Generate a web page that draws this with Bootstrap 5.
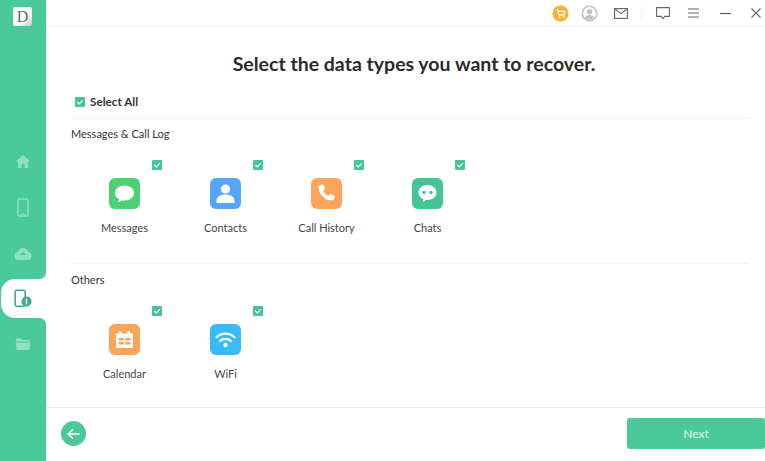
<!DOCTYPE html>
<html lang="en">
<head>
  <meta charset="UTF-8" />
  <meta name="viewport" content="width=device-width, initial-scale=1.0" />
  <title>Data Recovery</title>
  <link href="https://cdn.jsdelivr.net/npm/bootstrap@5.3.3/dist/css/bootstrap.min.css" rel="stylesheet">
  <style>
    html, body { height: 100%; overflow: hidden; }
    body { background: #fff; font-family: Lato, "Open Sans", "Liberation Sans", sans-serif; color: #333; }
    .app-shell { width: 765px; height: 461px; }

    .side-rail { width: 46px; background: #4ac99b; }
    .app-logo { width: 19px; height: 19px; margin: 7px 0 0 13px; background: linear-gradient(135deg, #fff 55%, #c9c9c9); border-radius: 2px; color: #5d6f69; font: 400 16px/19px "Liberation Serif", serif; text-align: center; }
    .rail-nav { margin-top: 116px; }
    .rail-item { height: 39px; margin-bottom: 6.5px; margin-left: 1px; padding-right: 2px; border-radius: 14px 0 0 14px; }
    .rail-item.is-active { background: #fff; position: relative; }
    .rail-item.is-active::before, .rail-item.is-active::after { content: ""; position: absolute; right: 0; width: 6px; height: 6px; }
    .rail-item.is-active::before { top: -6px; background: radial-gradient(circle at 0 0, #4ac99b 5.5px, #fff 6px); }
    .rail-item.is-active::after { bottom: -6px; background: radial-gradient(circle at 0 100%, #4ac99b 5.5px, #fff 6px); }

    .top-bar { height: 27px; border-bottom: 1px solid #f6f6f6; padding-right: 4px; }
    .top-sep { width: 1px; height: 14px; background: #f0f0f0; }
    .page-title { font-size: 19.5px; font-weight: 700; line-height: 24px; color: #2b2b2b; margin: 25px 0 0; padding-left: 17px; }
    .select-row { margin: 17px 0 3px 29px; height: 18px; font-size: 11.7px; font-weight: 700; color: #333; }
    .select-text { margin-left: 1px; }
    .tick-box { width: 10px; height: 10px; background: #45c596; border-radius: 1px; flex: none; }
    .tick-box svg { display: block; }
    .group-rule { height: 1px; background: #f3f3f3; margin: 0 15px 0 24px; }
    .group-rule.is-later { margin-bottom: 1px; }
    .group-name { font-size: 11px; line-height: 14px; margin: 8px 0 0 25px; color: #333; }
    .type-row { margin: 19px 0 0 28px; }
    .type-cell { width: 101px; height: 95px; padding-top: 18px; position: relative; }
    .type-cell .tick-box { position: absolute; top: 0; left: 78px; }
    .type-icon { width: 31px; height: 31px; border-radius: 6px; margin: 0 auto; }
    .type-icon svg { display: block; }
    .type-label { font-size: 11px; line-height: 14px; margin-top: 12px; color: #444; text-align: center; }

    .foot-bar { height: 54px; border-top: 1px solid #e8e8e8; padding-bottom: 2px; }
    .back-btn { width: 25px; height: 25px; margin-left: 15px; background: #4ac99b; border-radius: 50%; border: 0; padding: 0; }
    .next-btn { width: 138px; height: 31px; background: #4ac99b; border: 0; border-radius: 3px; color: #e4f7ef; font-size: 12px; padding: 0; }
  </style>
</head>
<body>
  <div class="app-shell d-flex">
    <aside class="side-rail flex-shrink-0">
      <div class="app-logo">D</div>
      <div class="rail-nav">
        <div class="rail-item d-flex align-items-center justify-content-center">
          <svg width="16" height="17" viewBox="0 0 18 18"><path d="M9 1.500 1 9h2.400v7.200h3.900v-4.600h3.400v4.600h3.900V9H17z" fill="#8fdfc1"/></svg>
        </div>
        <div class="rail-item d-flex align-items-center justify-content-center">
          <svg width="12" height="19" viewBox="0 0 12 19"><rect x="1" y="1" width="10" height="17" rx="1.500" fill="none" stroke="#8fdfc1" stroke-width="1.500"/><rect x="4" y="15.400" width="4" height="1.400" fill="#8fdfc1"/></svg>
        </div>
        <div class="rail-item d-flex align-items-center justify-content-center">
          <svg width="18" height="16" viewBox="0 0 18 16"><path d="M4.500 15A4 4 0 0 1 3.600 7.100 5.600 5.600 0 0 1 14.400 7.100 4 4 0 0 1 13.500 15z" fill="#8fdfc1"/><path d="M9 6.500 6 10h6z" fill="#4ac99b"/></svg>
        </div>
        <div class="rail-item is-active d-flex align-items-center justify-content-center">
          <svg width="18" height="19" viewBox="0 0 18 19"><rect x="1.200" y="1.200" width="10" height="16" rx="1.500" fill="none" stroke="#3fae87" stroke-width="1.600"/><circle cx="12.500" cy="12.500" r="5" fill="#3fae87"/><rect x="11.800" y="9.500" width="1.400" height="6" fill="#fff"/></svg>
        </div>
        <div class="rail-item d-flex align-items-center justify-content-center">
          <svg width="16" height="14" viewBox="0 0 16 14"><path d="M1 3V1.500h5L7.500 3H15v1.500H1z" fill="#8fdfc1"/><path d="M.5 5.500h15L14.400 13H1.600z" fill="#8fdfc1"/></svg>
        </div>
      </div>
    </aside>

    <main class="flex-grow-1 d-flex flex-column">
      <div class="top-bar d-flex align-items-center justify-content-end flex-shrink-0">
        <svg width="17" height="17" viewBox="0 0 17 17"><circle cx="8.500" cy="8.500" r="8" fill="#f9b233"/><path d="M4.500 5h1.400l1 5h5l1-3.600H6.200" fill="none" stroke="#fff" stroke-width="1.300"/><circle cx="7.300" cy="12" r=".9" fill="#fff"/><circle cx="11.500" cy="12" r=".9" fill="#fff"/></svg>
        <svg style="margin-left:12px" width="17" height="17" viewBox="0 0 17 17"><circle cx="8.500" cy="8.500" r="7.200" fill="#fff" stroke="#c2c2c2" stroke-width="1.600"/><circle cx="8.500" cy="6.700" r="2.700" fill="#c2c2c2"/><path d="M3.800 13c.8-2.300 2.600-3 4.700-3s3.900.7 4.700 3a7 7 0 0 1-9.400 0z" fill="#c2c2c2"/></svg>
        <svg style="margin-left:16px" width="14" height="11" viewBox="0 0 14 11"><rect x=".6" y=".6" width="12.800" height="9.800" fill="none" stroke="#666" stroke-width="1.100"/><path d="M1 1l6 4.600L13 1" fill="none" stroke="#666" stroke-width="1.100"/></svg>
        <span class="top-sep" style="margin-left:13px"></span>
        <svg style="margin-left:14px" width="14" height="13" viewBox="0 0 14 13"><path d="M.6.6h12.800v8.800H8.800L7 11.600 5.200 9.400H.6z" fill="none" stroke="#666" stroke-width="1.100"/></svg>
        <svg style="margin-left:18px" width="11" height="10" viewBox="0 0 11 10"><path d="M0 1h11M0 5h11M0 9h11" stroke="#666" stroke-width="1.100"/></svg>
        <svg style="margin-left:21px" width="11" height="3" viewBox="0 0 11 3"><path d="M0 1.500h11" stroke="#555" stroke-width="1.100"/></svg>
        <svg style="margin-left:20px" width="10" height="10" viewBox="0 0 10 10"><path d="M.5.500l9 9M9.500.500l-9 9" stroke="#666" stroke-width="1.100"/></svg>
      </div>

      <h1 class="page-title text-center">Select the data types you want to recover.</h1>

      <label class="select-row d-flex align-items-center gap-1">
        <span class="tick-box"><svg width="10" height="10" viewBox="0 0 10 10"><path d="M2.300 5l2 2 3.400-3.600" fill="none" stroke="#fff" stroke-width="1.200"/></svg></span>
        <span class="select-text">Select All</span>
      </label>
      <div class="group-rule mt-1"></div>

      <div class="group-name">Messages &amp; Call Log</div>
      <div class="type-row d-flex">
        <div class="type-cell">
          <span class="tick-box"><svg width="10" height="10" viewBox="0 0 10 10"><path d="M2.300 5l2 2 3.400-3.600" fill="none" stroke="#fff" stroke-width="1.200"/></svg></span>
          <div class="type-icon" style="background:#4dd176">
            <svg width="31" height="31" viewBox="0 0 31 31"><path d="M15.500 7.500c-5.500 0-9.500 3.300-9.500 7.500 0 2.700 1.700 5 4.300 6.300-.2 1-.9 2-1.800 2.700 1.900 0 3.500-.7 4.700-1.700.7.100 1.500.2 2.300.2 5.500 0 9.500-3.300 9.500-7.500s-4-7.500-9.500-7.500z" fill="#fff"/></svg>
          </div>
          <div class="type-label">Messages</div>
        </div>
        <div class="type-cell">
          <span class="tick-box"><svg width="10" height="10" viewBox="0 0 10 10"><path d="M2.300 5l2 2 3.400-3.600" fill="none" stroke="#fff" stroke-width="1.200"/></svg></span>
          <div class="type-icon" style="background:#55a5fa">
            <svg width="31" height="31" viewBox="0 0 31 31"><circle cx="15.500" cy="11" r="4.600" fill="#fff"/><path d="M6.500 25v-2c0-4 3.500-6.500 9-6.500s9 2.500 9 6.500v2z" fill="#fff"/></svg>
          </div>
          <div class="type-label">Contacts</div>
        </div>
        <div class="type-cell">
          <span class="tick-box"><svg width="10" height="10" viewBox="0 0 10 10"><path d="M2.300 5l2 2 3.400-3.600" fill="none" stroke="#fff" stroke-width="1.200"/></svg></span>
          <div class="type-icon" style="background:#fba55c">
            <svg width="31" height="31" viewBox="0 0 31 31"><path d="M8.500 7.500l3-.9c.6-.2 1 .1 1.200.6l1.300 3c.2.500.1.900-.3 1.300l-1.400 1.200c.9 2.300 2.700 4.200 5 5.300l1.400-1.500c.4-.4.800-.5 1.300-.3l3 1.300c.5.200.8.700.6 1.300l-.9 2.800c-.2.600-.7.900-1.300.9-8 .1-14-6.600-13.700-13.800 0-.6.300-1 .8-1.200z" fill="#fff"/></svg>
          </div>
          <div class="type-label">Call History</div>
        </div>
        <div class="type-cell">
          <span class="tick-box"><svg width="10" height="10" viewBox="0 0 10 10"><path d="M2.300 5l2 2 3.400-3.600" fill="none" stroke="#fff" stroke-width="1.200"/></svg></span>
          <div class="type-icon" style="background:#45c596">
            <svg width="31" height="31" viewBox="0 0 31 31"><path d="M15.500 7c-5.200 0-9 3.300-9 7.500 0 3 1.900 5.500 4.800 6.700l-.2 3 3.100-2.400c.4 0 .8.100 1.300.1 5.200 0 9-3.300 9-7.400S20.700 7 15.500 7z" fill="#fff"/><circle cx="12" cy="14.500" r="1.700" fill="#45c596"/><circle cx="19" cy="14.500" r="1.700" fill="#45c596"/></svg>
          </div>
          <div class="type-label">Chats</div>
        </div>
      </div>

      <div class="group-rule is-later mt-2"></div>

      <div class="group-name">Others</div>
      <div class="type-row d-flex">
        <div class="type-cell">
          <span class="tick-box"><svg width="10" height="10" viewBox="0 0 10 10"><path d="M2.300 5l2 2 3.400-3.600" fill="none" stroke="#fff" stroke-width="1.200"/></svg></span>
          <div class="type-icon" style="background:#fba55c">
            <svg width="31" height="31" viewBox="0 0 31 31"><path d="M7 9.500h17v14.500H7z" fill="#fff"/><rect x="10" y="7" width="2.500" height="5" rx="1" fill="#fff"/><rect x="18.500" y="7" width="2.500" height="5" rx="1" fill="#fff"/><path d="M9.500 14h5.300v2.500H9.500zM16.200 14h5.300v2.500h-5.300zM9.500 18h5.300v2.500H9.500zM16.200 18h5.300v2.500h-5.300z" fill="#fba55c"/></svg>
          </div>
          <div class="type-label">Calendar</div>
        </div>
        <div class="type-cell">
          <span class="tick-box"><svg width="10" height="10" viewBox="0 0 10 10"><path d="M2.300 5l2 2 3.400-3.600" fill="none" stroke="#fff" stroke-width="1.200"/></svg></span>
          <div class="type-icon" style="background:#38bbfb">
            <svg width="31" height="31" viewBox="0 0 31 31"><g fill="none" stroke="#fff" stroke-width="2.200" stroke-linecap="round"><path d="M6.500 13.200c5-4.700 13-4.700 18 0"/><path d="M10 17c3-2.800 8-2.800 11 0"/></g><circle cx="15.500" cy="21" r="2.200" fill="#fff"/></svg>
          </div>
          <div class="type-label">WiFi</div>
        </div>
      </div>

      <div class="foot-bar mt-auto d-flex align-items-center justify-content-between flex-shrink-0">
        <button class="back-btn d-flex align-items-center justify-content-center" type="button">
          <svg width="13" height="12" viewBox="0 0 13 12"><path d="M12.500 6H1.500M6 1.200 1.300 6 6 10.800" fill="none" stroke="#fff" stroke-width="1.600"/></svg>
        </button>
        <button class="next-btn" type="button">Next</button>
      </div>
    </main>
  </div>
  <script src="https://cdn.jsdelivr.net/npm/bootstrap@5.3.3/dist/js/bootstrap.bundle.min.js"></script>
</body>
</html>
